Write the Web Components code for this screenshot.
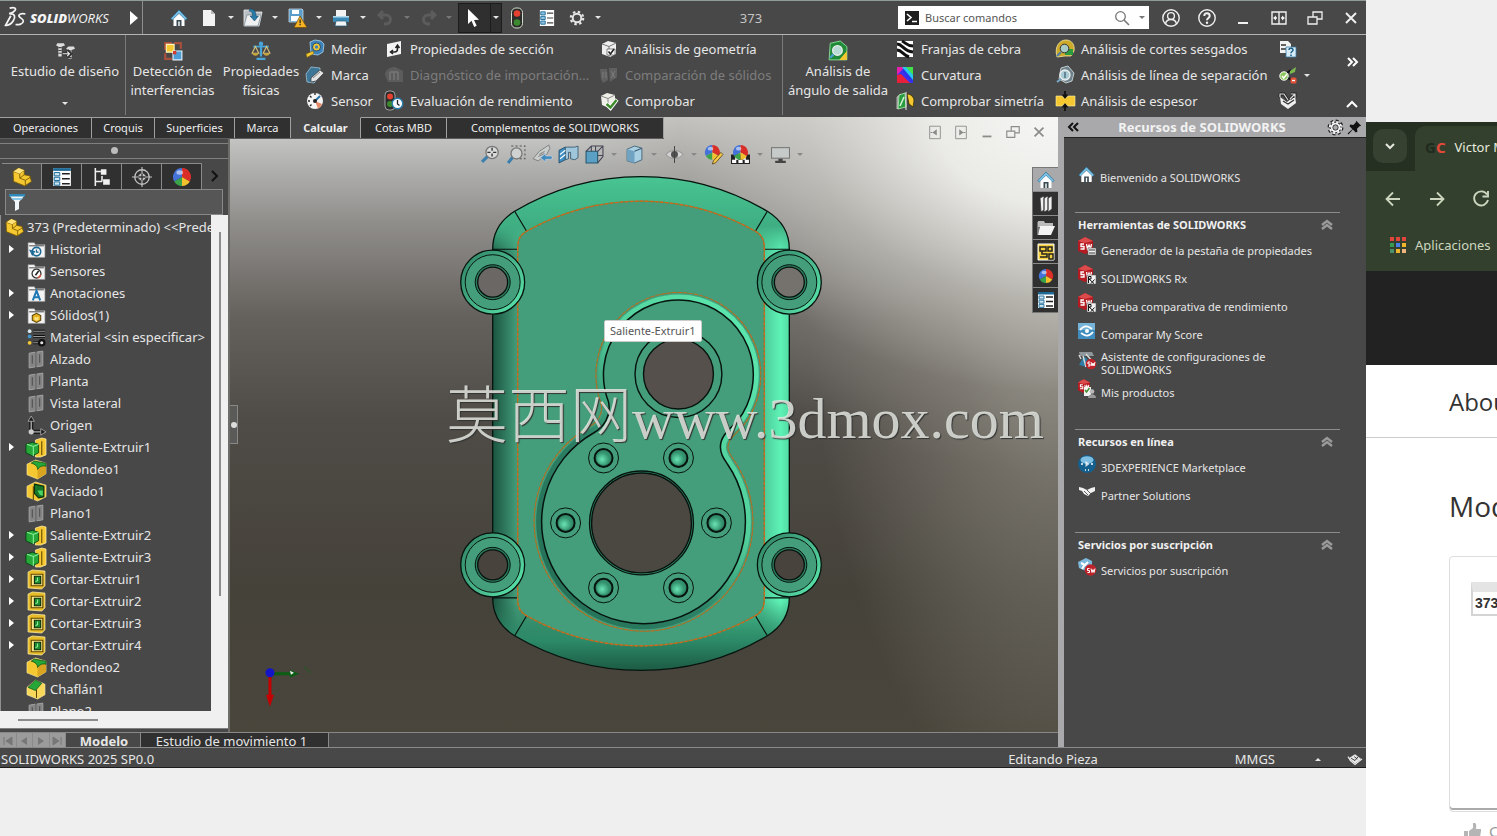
<!DOCTYPE html>
<html lang="es">
<head>
<meta charset="utf-8">
<title>373 - SOLIDWORKS</title>
<style>
html,body{margin:0;height:100%}
body{display:flex;overflow:hidden;background:#efefef;font:13px/18px "Noto Sans","Open Sans",sans-serif;color:#e6e6e6}
cad-desktop{flex:1;min-width:0}
web-browser{flex:0 0 131px}
</style>
</head>
<body>
<cad-desktop></cad-desktop>
<web-browser></web-browser>
<script>
const BASE = `<style>
*,:host{box-sizing:border-box}
button,input{font:inherit;color:inherit;background:none;border:0;padding:0;margin:0}
button{display:flex;align-items:center;justify-content:center}
a{color:inherit;text-decoration:none}
ul{list-style:none;margin:0;padding:0}
:host([hidden]){display:none}
</style>`;
function define(name, html, setup){
  const t = document.createElement('template');
  t.innerHTML = BASE + html;
  customElements.define(name, class extends HTMLElement{
    connectedCallback(){
      if(this.shadowRoot) return;
      this.attachShadow({mode:'open'}).append(t.content.cloneNode(true));
      if(setup) setup(this, this.shadowRoot);
    }
  });
}

/* ---------- icons, all on an 18 x 18 grid ---------- */
const ball = (x,y,r)=>`<g transform="translate(${x} ${y}) scale(${r/8})"><path fill="#4472d8" d="M0 0V-8A8 8 0 0 0-7 4Z"/><path fill="#d92f28" d="M0 0V-8A8 8 0 0 1 7 4Z"/><path fill="#3ba34a" d="M0 0-7 4A8 8 0 0 0 0 8Z"/><path fill="#f2c12d" d="M0 0 7 4A8 8 0 0 1 0 8Z"/><ellipse cx="-2" cy="-4" rx="3" ry="2" fill="#fff" opacity=".55"/></g>`;
const folder = `<path d="M1 2.500h6l1 2h9v12H1z" fill="#f4f4f4" stroke="#8d8d8d" stroke-width=".6"/><path d="M2 5h14v1H2z" fill="#555"/>`;
const swcube = `<path d="M0 3 7 -1l8 4v10l-8 3-7-3z" fill="#b51a21"/><path d="M0 3 7 -1l8 4-8 2z" fill="#dd4a4c"/><path d="M6 6H3v2.500H6V11H2.500M8.500 6l1 5 1.500-4 1.500 4 1-5" stroke="#fff" fill="none" stroke-width="1.300"/>`;
const yb = '#f5c832', gr='#25a838';
const ICONS = {
 home:`<path d="M9 1 .800 9.500 2.500 11 9 4.500l6.500 6.500 1.700-1.500z" fill="#79c4e8" stroke="#1d5f86" stroke-width=".6"/><path d="M3.500 10 9 4.800l5.500 5.200v7h-11z" fill="#fff"/><path d="M6.500 17v-6h5v6h-1.800v-4.500H8.300V17z" fill="#3a4a52"/>`,
 newdoc:`<path d="M3 1h8l4 4v12H3z" fill="#f2f2f2"/><path d="M11 1v4h4z" fill="#b8b8b8"/>`,
 open:`<path d="M0 1h6l1 2h11l-3 14H0z" fill="#b9c0c5" stroke="#eee" stroke-width=".8"/><path d="M3 6h14l-3 11H0z" fill="#eef0f2" stroke="#6a7780" stroke-width=".6"/><path d="M6 0c4 0 6 2 6 7h2.500L10.500 12 6 7h2.500C8.500 4 8 2.500 5 2z" fill="#2b7ba8" stroke="#12405c" stroke-width=".5"/>`,
 save:`<path d="M1 0h13l1 1v12H1z" fill="#5b9cc9" stroke="#d7e9f5" stroke-width=".7"/><path d="M4 1h7v4H4zM3 7h9v5H3z" fill="#fff"/><path d="M12 7 6 18.500h13z" fill="#f5b325" stroke="#6b4600" stroke-width=".7"/><path d="M11.500 10.500h1.200v3.700h-1.200zm0 4.500h1.200v1.200h-1.200z" fill="#222"/>`,
 print:`<path d="M4 1h10v6H4z" fill="#f4f4f4"/><path d="M1 7h16v6H1z" fill="#3b8ab5"/><path d="M1 7h16v1.500H1z" fill="#b6dcf0"/><path d="M4 12h10l1 5H3z" fill="#f4f4f4" stroke="#215a7a" stroke-width=".7"/>`,
 undo:`<path d="M3 6h7a4 4 0 0 1 0 9H8M7 2 3 6l4 4" fill="none" stroke="#5c5c5c" stroke-width="3"/>`,
 redo:`<path d="M15 6H8a4 4 0 0 0 0 9h2M11 2l4 4-4 4" fill="none" stroke="#5c5c5c" stroke-width="3"/>`,
 cursor:`<path d="M2 0v15l3.500-3.200 2.700 6.200 2.500-1.200-2.700-5.800 5-.3z" fill="#fff"/>`,
 traffic:`<rect x="3.500" y="-1" width="11" height="20" rx="4.500" fill="#2c2c2c" stroke="#d0dccb" stroke-width="1"/><circle cx="9" cy="4.500" r="3.300" fill="#e3402f"/><circle cx="9" cy="13.500" r="3.300" fill="#3c8a2f"/>`,
 list:`<path d="M1 1h16v16H1z" fill="#fff"/><path d="M1 1h16v2.500H1z" fill="#1d6a97"/><path d="M2 5h5v3H2zm0 4.200h5v3H2zm0 4.200h5v3H2z" fill="#cfe6f4" stroke="#1d6a97" stroke-width=".9"/><path d="M9 6h7M9 10.500h7M9 15h7" stroke="#222" stroke-width="1.300"/>`,
 proplist:`<path d="M1 0h16v18H1z" fill="#fff"/><path d="M2 2h5v3.500H2zm0 5.200h5v3.500H2zm0 5.200h5V16H2z" fill="#8cc4e4" stroke="#1d6a97" stroke-width="1"/><path d="M9 3.500h7M9 9h7M9 14.500h7" stroke="#444" stroke-width="1.300"/>`,
 gear:`<circle cx="9" cy="9" r="4.800" fill="none" stroke="currentColor" stroke-width="2.200"/><circle cx="9" cy="9" r="7" fill="none" stroke="currentColor" stroke-width="2.400" stroke-dasharray="2.750 2.748"/>`,
 cog:`<circle cx="9" cy="9" r="8" fill="none" stroke="#222" stroke-width="3" stroke-dasharray="3.400 2.883"/><circle cx="9" cy="9" r="7" fill="#222"/><circle cx="9" cy="9" r="6.800" fill="none" stroke="#f2f2f2" stroke-width="2.400" stroke-dasharray="2.800 2.541"/><circle cx="9" cy="9" r="5.800" fill="#f2f2f2"/><circle cx="9" cy="9" r="3.200" fill="#a9a9ab" stroke="#222"/>`,
 user:`<g fill="none" stroke="#f0f0f0" stroke-width="1.400"><circle cx="9" cy="9" r="8.200"/><circle cx="9" cy="7" r="3.400"/><path d="M3.500 15c1-6 10-6 11 0"/></g>`,
 help:`<circle cx="9" cy="9" r="8.200" fill="none" stroke="#f0f0f0" stroke-width="1.400"/><path d="M6.300 7C6.300 3 11.800 3.400 11.700 7c0 2-2.700 2.100-2.700 4.300" fill="none" stroke="#f0f0f0" stroke-width="2"/><circle cx="9" cy="13.700" r="1.200" fill="#f0f0f0"/>`,
 min:`<path d="M4 13h10v2H4z" fill="currentColor"/>`,
 split:`<path d="M2 3h14v12H2zM9 3v12M4 9h3M11 9h3" fill="none" stroke="#f0f0f0" stroke-width="1.400"/><path d="M3 9l3-2.500v5zM15 9l-3-2.500v5z" fill="#f0f0f0"/>`,
 restore:`<path d="M2 8h9v7H2zM7 8V3h9v7h-5" fill="none" stroke="currentColor" stroke-width="1.300"/>`,
 close:`<path d="M4 4l10 10M14 4 4 14" stroke="currentColor" stroke-width="1.900"/>`,
 search:`<circle cx="7.500" cy="7.500" r="4.800" fill="none" stroke="#777" stroke-width="1.300"/><path d="M11 11l5 5" stroke="#777" stroke-width="1.600"/>`,
 cmd:`<path d="M2 2h14v14H2z" fill="#1f1f1f"/><path d="M4 5l4 3.500L4 12M9 12.500h5" stroke="#fff" stroke-width="1.600" fill="none"/>`,
 paneL:`<path d="M3 2.500h12v14H3z" fill="none" stroke="#8b8b89"/><path d="M11 6v7L6 9.500zM4 9h2v1H4z" fill="#8b8b89"/>`,
 paneR:`<path d="M3 2.500h12v14H3z" fill="none" stroke="#8b8b89"/><path d="M7 6v7l5-3.500zM12 9h2v1h-2z" fill="#8b8b89"/>`,
 design:`<path d="M2 2h6l1 2-3 1v9H3V5L1 4z" fill="#ddd"/><path d="M3 6h3M3 8.500h3M3 11h3" stroke="#444"/><path d="M12 5h5l1 2-3 1v8h-3V8l-2-1z" fill="#ddd"/><path d="M12 9h3M12 15h3" stroke="#444"/><path d="M7 11.500h7M11 8.500l3 3-3 3" stroke="#333" stroke-width="3" fill="none"/><path d="M7 11.500h6M11 9.500l2 2-2 2" stroke="#eee" fill="none"/>`,
 interf:`<path d="M1 1h7v2H3v5H1zM17 1h-7v2h5v4h2zM1 17h7v-2H3v-4H1z" fill="#a8503c"/><path d="M3 3h7v7H3z" fill="${yb}" stroke="#fff6c0"/><path d="M9 9h8v8H9z" fill="#4d9ed6" stroke="#e4f3ff"/><path d="M9 9h3v3H9z" fill="#d93b2a"/>`,
 balance:`<path d="M8 2h2v12H8zM5 15h8v2H5z" fill="#49a4d8"/><circle cx="9" cy="2.500" r="2" fill="#49a4d8"/><path d="M2 5h14" stroke="#49a4d8" stroke-width="1.600"/><path d="M4 5 1 11h6zM14 5l-3 6h6z" fill="none" stroke="#d8c27a"/><path d="M1 11h6c-1 3-5 3-6 0zM11 11h6c-1 3-5 3-6 0z" fill="#c8a43c"/>`,
 measure:`<path d="M4 2 9 0l6 1 3 3-1 8-5 3-7-1z" fill="#3c82b8" stroke="#a9d4ef" stroke-width=".8"/><circle cx="10.500" cy="7" r="4" fill="#f5c832" stroke="#244d70"/><circle cx="10.500" cy="7" r="1.700" fill="#3c82b8"/><path d="M0 14 7 11l1 2.500-7 4z" fill="${yb}" stroke="#6b5a10" stroke-width=".6"/>`,
 markup:`<path d="M0 8 5 1l9 1v9l-6 6-7-1z" fill="#3d7596" stroke="#9ec3d6" stroke-width=".8"/><path d="M5 12 14 4l4 3-8 8-5 1z" fill="#e4e4e4" stroke="#333" stroke-width=".7"/><path d="M7 12l7-6" stroke="#888"/>`,
 sensor:`<circle cx="9" cy="9" r="8" fill="#f5f5f5"/><path d="M16 12a8 8 0 0 1-4 4.500L9 9z" fill="#e58a68"/><path d="M9 9 14 4" stroke="#2872a8" stroke-width="2"/><circle cx="9" cy="9" r="2" fill="#222"/><path d="M2 9h2M4 4l1.500 1.500M9 1v2M4 14l1.500-1.500" stroke="#222" stroke-width="1.300"/>`,
 secprop:`<path d="M2 4 16 1v13L2 17z" fill="#f3f3f3"/><path d="M6 12h3.500c2 0 3-1 3-3V6M10.500 8l2-3 2 3M8 10l-2.500 2L8 14" fill="none" stroke="#222" stroke-width="1.500"/>`,
 diag:`<path d="M0 9C0 3 6 1 10 1l8 4v11H3z" fill="#5c5c5c"/><path d="M5 6v8M9 6v8M13 6v8M5 6h8" stroke="#777" stroke-width="1.500"/>`,
 evalp:`<rect x="0" y="-1" width="10" height="19" rx="4" fill="#2c2c2c" stroke="#bbb" stroke-width=".8"/><circle cx="5" cy="4.500" r="3" fill="#e3402f"/><circle cx="5" cy="12" r="3" fill="#3c8a2f"/><circle cx="12.500" cy="11.500" r="5.300" fill="#f7fbff" stroke="#2b7ba8" stroke-width="1.400"/><path d="M12.500 8v4l2 1.500" stroke="#222" fill="none" stroke-width="1.300"/>`,
 geom:`<path d="M2 4 8 1l8 2v11l-6 3-8-3z" fill="#eee"/><path d="M2 4l7 2.500L16 3M9 6.500V17" stroke="#777" fill="none"/><path d="M7 9h8v6H7z" fill="#fff" stroke="#555" stroke-width=".7"/><path d="M8.500 11.500 10.500 14 14 9" stroke="#222" stroke-width="1.600" fill="none"/>`,
 comps:`<path d="M0 3h7l1 11-5 3-2-4zM9 2h8v9l-7 5z" fill="#606060"/><path d="M3 6v6M6 6v6M11 5l4 7M15 5l-4 7" stroke="#7c7c7c"/>`,
 check:`<path d="M1 4 7 1l8 2v10l-6 3-7-3z" fill="#f0f0ea"/><path d="M1 4l7 2.500L15 3M8 6.500V16" stroke="#888" fill="none"/><path d="M6 11.500 10.500 16 17 7.500" stroke="#fff" stroke-width="4" fill="none"/><path d="M6.500 12 10.500 15.500 16.500 8" stroke="#3f8c2c" stroke-width="2.500" fill="none"/>`,
 draft:`<path d="M2 2 11 0l6 5v12H1z" fill="#1f8b38" stroke="#8fe09a" stroke-width=".8"/><path d="M17 9v8h-7z" fill="${yb}"/><circle cx="8.500" cy="8.500" r="4.300" fill="#b9dbd6" stroke="#eee" stroke-width="1.200"/><path d="M5 12l-3 3" stroke="#4d9ed6" stroke-width="2"/>`,
 zebra:`<path d="M1 1h16v16H1z" fill="#fff"/><path d="M1 4c6 0 6 7 16 8M1 10c5 0 6 5 12 7M6 1c4 2 5 5 11 5" stroke="#111" stroke-width="3" fill="none"/>`,
 curv:`<path d="M1 1h16v16H1z" fill="#2a35e6"/><path d="M1 1h7L1 13z" fill="#e81fae"/><path d="M1 9 6 4l11 13H4z" fill="#3b2ff0"/><path d="M1 9l4-1 9 9H1z" fill="#e8203c"/><path d="M8 1h9v9z" fill="#3fe04a"/><path d="M6 1h4l7 8v5z" fill="#27c6f0"/>`,
 symm:`<path d="M1 5 5 2v12l-4 3z" fill="#8c8c8c" stroke="#ddd" stroke-width=".7"/><path d="M3 3 9 1l1 14-8 2z" fill="#2a9c40" stroke="#b6ecb9" stroke-width=".8"/><path d="M4 14 8 5" stroke="#d8f5da" stroke-width="1.500"/><path d="M11 2c4 0 7 3 7 7l-1 6-4-3z" fill="${yb}" stroke="#3b3100" stroke-width=".8"/><path d="M10 0v18" stroke="#eee"/>`,
 undercut:`<path d="M1 17C-2 6 4 0 10 0s9 5 8 11l-3 5H9z" fill="#cda92a" stroke="#f8e89a" stroke-width=".8"/><path d="M9 9h8v6H9z" fill="#2b9b3d"/><circle cx="8.500" cy="8.500" r="4.300" fill="#a9cbc6" stroke="#333" stroke-width="1"/><path d="M5 12l-4 4" stroke="#4d7ea6" stroke-width="2"/>`,
 parting:`<path d="M5 2 12 0l6 7-2 8-6 2-7-4z" fill="#6b8088" stroke="#dbe6ea" stroke-width=".8"/><circle cx="9" cy="9" r="5" fill="#a9cbd6" stroke="#eee" stroke-width="1.300"/><path d="M5 13l-4 3" stroke="#79a8c6" stroke-width="2"/><path d="M9 6v6" stroke="#23414f"/>`,
 thick:`<path d="M0 4h5c2 0 2 2 4 2s2-2 4-2h6v10h-6c-2 0-2-2-4-2s-2 2-4 2H0z" fill="${yb}" stroke="#fff0a8" stroke-width=".6"/><path d="M9-1v5M9 19v-5" stroke="#111" stroke-width="1.800"/><path d="M6 2.500h6L9 7zM6 15.500h6L9 11z" fill="#111"/>`,
 dochelp:`<path d="M1 1h8l3 3v9H1z" fill="#f2f2f2"/><path d="M2 9h8M2 5h5" stroke="#333" stroke-width="1.500"/><path d="M7 7h10v10H7z" fill="#d8ecf7" stroke="#3b7ca5" stroke-width=".8"/><path d="M10 10c0-2.500 4-2 4 0 0 1.500-2 1.500-2 3.200M12 14.500v1.500" stroke="#1d5f86" stroke-width="1.500" fill="none"/>`,
 tree:`<path d="M5 9 12 4M5 10l8 4" stroke="#111" stroke-width="2"/><circle cx="5" cy="10" r="4.200" fill="#8cc65a" stroke="#fff"/><path d="M3 10l1.700 2L8 8" stroke="#fff" fill="none" stroke-width="1.500"/><path d="M11 5l6-4-1 5-5 2z" fill="#7db84f"/><rect x="11.500" y="11.500" width="6" height="6" rx="1.500" fill="#e05338"/><path d="M13 14.500h3" stroke="#fff" stroke-width="1.300"/>`,
 swtri:`<path d="M1 5 8 10l8-6 1 7-8 6-7-5z" fill="#efefef"/><path d="M1 2h4l4 6M1 2v3M11 7l5-5M12 2h4v4" fill="none" stroke="#222" stroke-width="3"/><path d="M1 2h4l4 6M1 2v3M11 7l5-5M12 2h4v4" fill="none" stroke="#ddd" stroke-width="1.200"/><path d="M4 9l5 3 6-4" stroke="#333" fill="none" stroke-width="1.300"/>`,
 part:`<path d="M1 4 6 1l5 2v4l5 1 1.500 5-6 4-10-4z" fill="${yb}" stroke="#7a5b00" stroke-width=".7"/><path d="M1 4l6 2v4l5 2v5M7 6l4-3M7 10l4-3M12 12l5-3" fill="none" stroke="#7a5b00" stroke-width=".8"/><path d="M1.500 4l4.500-3 5 2-4 3z" fill="#ffe27a"/>`,
 config:`<path d="M3 1v16M3 4h5M3 13h6M9 8v5" stroke="#f0f0f0" stroke-width="1.400" fill="none"/><path d="M8 2h5v5H8zM10 11h6v5h-6z" fill="#f0f0f0"/>`,
 target:`<circle cx="9" cy="9" r="6.500" fill="none" stroke="#c4c4c4" stroke-width="1.200"/><path d="M9 0v18M0 9h18" stroke="#c4c4c4"/><path d="M7 6h4v6H7zM6 7h6v4H6z" fill="#c4c4c4"/><path d="M9 6v6M6 9h6" stroke="#333" stroke-width="1.200"/>`,
 ball:ball(9,9,8),
 funnel:`<path d="M1 2h16l-6 7v7l-4 2V9z" fill="#f0f6fa"/><path d="M1 1h16v2.500H1z" fill="#2e88b8"/><path d="M3 5h12l-2 2H5z" fill="#8cc9e8"/>`,
 fhist:folder+`<circle cx="9" cy="11" r="4" fill="none" stroke="#1d6a97" stroke-width="1.500"/><path d="M5 14l-2-4 4 1zM9 9v2.500h2" stroke="#1d6a97" fill="none" stroke-width="1.200"/>`,
 fsens:folder+`<circle cx="9" cy="11" r="4.200" fill="#fff" stroke="#333" stroke-width="1.200"/><path d="M8 12.500l3-4" stroke="#222" stroke-width="1.500"/><path d="M10 15a4 4 0 0 0 3-3" stroke="#e0583a" stroke-width="1.500" fill="none"/>`,
 fnote:folder+`<path d="M5.500 15.500 9 6.500l3.500 9M6.800 12.500h4.400" stroke="#1d78b4" stroke-width="1.900" fill="none"/>`,
 fsolid:folder+`<path d="M5 9l4-2 4 2v4.500l-4 2-4-2z" fill="#e8b21e" stroke="#5a4300"/><path d="M7 10l2 1 2-1v3l-2 1-2-1z" fill="#fbe27c"/>`,
 material:`<g><circle cx="2.500" cy="3" r="1.800" fill="#d9e6ee"/><circle cx="2.500" cy="8" r="1.800" fill="#3f95c8"/><circle cx="2.500" cy="14" r="1.800" fill="${yb}"/><path d="M6 3h11M6 8h11M6 14h5" stroke="#111" stroke-width="2.600"/><path d="M6 3h11M6 8h11M6 14h5" stroke="#999"/><circle cx="14" cy="14" r="3.600" fill="#111"/><circle cx="14" cy="14" r="1.500" fill="#ddd"/></g>`,
 plane:`<path d="M2 3l6-1v14l-6 1zM9 2l6-1v14l-6 1z" fill="#858585" stroke="#aaa" stroke-width=".8"/><path d="M8.500 0v18M5 5v8M12 4v8" stroke="#505050"/>`,
 origin:`<path d="M4 3v12h12" fill="none" stroke="#1c1c1c" stroke-width="4"/><path d="M4 2v13h13" fill="none" stroke="#aaa" stroke-width="1.300"/><path d="M1 5l3-5 3 5zM13 12l5 3-5 3z" fill="#1c1c1c" stroke="#aaa" stroke-width=".8"/><circle cx="4" cy="15" r="2.500" fill="#ccc"/>`,
 extrude:`<path d="M8 2l6-2 4 1v15l-5 2H8z" fill="${yb}" stroke="#fff0a8" stroke-width=".7"/><path d="M14 3v13" stroke="#5a4300"/><path d="M-1 6l6-2 6 2v8l-6 3-6-3z" fill="${gr}" stroke="#063f10" stroke-width=".8"/><path d="M0 6l6 2 5-2M6 8v9" stroke="#8df09a" fill="none"/>`,
 fillet:`<path d="M0 4 8 0l10 3v10l-8 5-10-4z" fill="${yb}" stroke="#fff0a8" stroke-width=".6"/><path d="M10 8l8-4v9l-8 5z" fill="#d9a520"/><path d="M7 1l11 2v3c-3-1-6 0-8 3 0-3-2-5-6-6z" fill="${gr}" stroke="#063f10" stroke-width=".6"/>`,
 shell:`<path d="M0 4 8 0l10 3v11l-8 4-10-4z" fill="${yb}" stroke="#fff0a8" stroke-width=".6"/><path d="M7 2l9 2v10l-5 1-4-4z" fill="#17752a" stroke="#042b0a"/><path d="M10 8h5v5l-3-1z" fill="#4cd561"/><path d="M6 4v13" stroke="#5a4300"/>`,
 cut:`<path d="M1 2 5 0l12 1v14l-3 3-13-1z" fill="#e8bc26" stroke="#fff0a8" stroke-width=".7"/><path d="M4 4h11v11H4z" fill="#ffe88c" stroke="#5a4300"/><path d="M7 6h6v7H7z" fill="#1d8b31" stroke="#042b0a"/><path d="M8 11l2-1V7" stroke="#8df09a" fill="none"/>`,
 chamfer:`<path d="M0 7 8 0l9 4v10l-7 4-10-4z" fill="#f8d85a" stroke="#fff0a8" stroke-width=".6"/><path d="M1 7 8 0l6 3-6 7z" fill="${gr}" stroke="#063f10" stroke-width=".6"/><path d="M9 9v8" stroke="#5a4300"/>`,
 zoomfit:`<path d="M7 10 1 16" stroke="#3d7fae" stroke-width="3"/><circle cx="10.500" cy="7" r="5.800" fill="#d8dbd9" stroke="#777" stroke-width="1.200"/><path d="M10.500 2.500v9M6 7h9" stroke="#333" stroke-width="1.300" stroke-dasharray="3 2.500"/>`,
 zoomarea:`<path d="M4 1h13v12H9" fill="none" stroke="#555" stroke-dasharray="2 2"/><path d="M6 11 1 17" stroke="#3d7fae" stroke-width="3"/><circle cx="9" cy="8" r="5.200" fill="#cfd2d0" stroke="#777" stroke-width="1.200"/>`,
 prev:`<path d="M0 13 6 6l9-6 1 3-3 6-8 6z" fill="#c9cecd" stroke="#777" stroke-width=".8"/><path d="M6 9l5-3M5 11l6-3" stroke="#888"/><path d="M7 12l5-4v2.500h6v3h-6V16z" fill="#3d8abc" stroke="#dde" stroke-width=".5"/>`,
 section:`<path d="M0 5 6 2v12l-6 3z" fill="#3f8fc4" stroke="#234a66" stroke-width=".8"/><path d="M6 2h9l3-1v11l-3 2-4-1V7H9v6l-3 1z" fill="#9fc6db" stroke="#34576c" stroke-width=".8"/><path d="M1 9l5-4M1 13l5-4" stroke="#fff"/>`,
 orient:`<path d="M1 6h11v11H1z" fill="#5a9fc4" stroke="#24566f"/><path d="M1 6l5-5h11v10l-5 6M12 6l5-5M6 1v5M10 1v5M12 10h5" fill="none" stroke="#445"/>`,
 cube:`<path d="M2 4 9 1l7 2v11l-7 3-7-2z" fill="#a9cfe3" stroke="#3b5b6e" stroke-width=".8"/><path d="M2 4l7 2v11l-7-2z" fill="#6fa3c1"/><path d="M9 6l7-3" stroke="#3b5b6e"/>`,
 eye:`<path d="M1 9c4-5 12-5 16 0-4 5-12 5-16 0z" fill="#d2d2d2" stroke="#999"/><circle cx="9" cy="9" r="3.300" fill="#505050"/><path d="M9 1v16" stroke="#444"/>`,
 appear:ball(7,7,7)+`<path d="M8 15 15 7l2 2-7 8-3 1z" fill="#f3c64a" stroke="#4c3a10" stroke-width=".7"/>`,
 scene:`<path d="M0 9h18v9H0z" fill="#222"/><path d="M1 14h4v3H1zM7 14h4v3H7zM13 14h4v3h-4zM4 11h3v3H4zM11 11h3v3h-3z" fill="#fff"/>`+ball(9,7,7),
 monitor:`<path d="M0 2h18v11H0z" fill="#777"/><path d="M1 3h16v9H1z" fill="#c6cac8"/><path d="M7 13h4v2h3v2H4v-2h3z" fill="#444"/>`,
 books:`<g fill="#efefef" stroke="#333" stroke-width=".8"><path d="M3 3l4-2v14l-3 2zM7 3l4-2v14l-4 2zM11 3l4-2v13l-4 3z"/></g>`,
 folderopen:`<path d="M1 2h6l1 2h8v4H1z" fill="#bbb"/><path d="M3 7h15l-4 9H1z" fill="#f3f3f3"/><path d="M1 3v13" stroke="#bbb"/>`,
 palette:`<path d="M1 1h16v16H1z" fill="#f4d13c" stroke="#fff"/><path d="M3 4h6v4H3zM11 4h4v4h-4zM5 8v3h5v3H3M12 11h4v5h-4z" fill="none" stroke="#222" stroke-width="1.500"/>`,
 sw:swcube+`<path d="M10 10h8v7h-8z" fill="#f2f2f2" stroke="#555" stroke-width=".6"/><path d="M11 12h6M11 15h6" stroke="#333"/>`,
 swrx:swcube+`<path d="M9 9h9v9H9z" fill="#f2f2f2" stroke="#555" stroke-width=".6"/><path d="M10.500 17v-6.500h2.500v2.500h-2l5 4.500M13 17.500l3.500-4" stroke="#111" fill="none"/>`,
 score:`<path d="M0 1h17v16H0z" fill="#3f8ebf"/><path d="M0 1h17v7H0z" fill="#75b4d8"/><path d="M2 8c5-6 9-3 12-1M15 10c-5 6-9 3-12 1" stroke="#fff" stroke-width="1.800" fill="none"/><circle cx="9" cy="9" r="2" fill="#fff"/>`,
 wizard:`<path d="M1 1h13l2 4H2z" fill="#8f979a"/><path d="M1 14 6 5l6 6-3 5z" fill="#2e7ca8"/><path d="M1 4l2 4M5 5l3 11M8 3l8 9" stroke="#ddd" stroke-width="1.400"/><circle cx="13" cy="13" r="5.300" fill="#c0222a"/><path d="M12 11h-2v2h2v2h-2M13 11l1 4 1-3 1 3 1-4" stroke="#fff" fill="none"/>`,
 prod:`<g transform="scale(.8)">${swcube}</g><path d="M6 7h7v9H6z" fill="#f2f2f2"/><path d="M7 10l1.500 2 3-4" stroke="#3f8c2c" fill="none" stroke-width="1.400"/><path d="M10 18c0-5 8-5 8 0z" fill="#9a9a9a"/><circle cx="14" cy="11.500" r="2.300" fill="#bbb"/>`,
 dx:`<circle cx="9" cy="9" r="9" fill="#14608f"/><ellipse cx="9" cy="5" rx="6.500" ry="3.800" fill="#7fbfe2"/><path d="M7.500 6v6l4-3z" fill="#fff" opacity=".8"/><path d="M3 9h2M13 9h2M7 15h1M10 15h1" stroke="#fff" stroke-width="1.400"/>`,
 hands:`<path d="M1 4l4 1 4 2 4-2 4-1v4l-4 2-3 3-4-2-2-3-3-1z" fill="#f1f1f1"/><path d="M6 8l4 4M9 7l4 4" stroke="#555" stroke-width=".9"/>`,
 subs:`<path d="M0 4 8 0l6 3v8l-6 2-7-3z" fill="#7cb9dc"/><path d="M3 5l4 2 3-3M4 11l3-5" stroke="#fff" stroke-width="2" fill="none"/><circle cx="12.500" cy="12" r="5.800" fill="#c0222a"/><path d="M11.500 10.500h-2v2h2v2h-2M13 10.500l1 4 1-3 1 3 1-4" stroke="#fff" fill="none"/>`,
 pin:`<path d="M11 1l6 6-2 .5-3 3 .5 3.500-2 1-3.500-3.500L2 17l-1 0 0-1 5.500-5L3 7.500l1-2 3.500.5 3-3z" fill="#111"/>`,
 tagsw:`<path d="M1 8l8-5 8 6-8 6z" fill="#e8e8e8"/><path d="M0 9l9 7 9-6M4 8l5 3 4-5M8 6l4 3" fill="none" stroke="#333" stroke-width="1.200"/><path d="M0 6l3 5 6 5 9-7" fill="none" stroke="#e8e8e8" stroke-width="1.500"/>`,
 logo:`<g fill="none" stroke="#f4f4f4" stroke-width="1.500"><path d="M4 1C8 0 10 1 8.500 3 7.500 4.500 5 5.500 3.500 5.700M4 6c5-.5 5 3 3 6-1.500 2.500-4.500 4-6.500 3.700L5 7.500M17.500 6C14 5 11.500 6.500 12 8c.5 1.500 4 2 3.700 4.200-.2 2.300-3.700 3.300-6.700 2.800"/></g>`,
 down:`<path d="M5 7l4 4 4-4" fill="none" stroke="#e4e8dc" stroke-width="2"/>`,
 back:`<path d="M16 9H3M9 2.500 2.500 9 9 15.500" fill="none" stroke="#cdd6bf" stroke-width="1.800"/>`,
 fwd:`<path d="M2 9h13M9 2.500 15.500 9 9 15.500" fill="none" stroke="#cdd6bf" stroke-width="1.800"/>`,
 reload:`<path d="M15 4.500A7 7 0 1 0 16 10M16 1v5.500h-5.500" fill="none" stroke="#cdd6bf" stroke-width="1.900"/>`,
 apps:['#e2453c','#e2453c','#e2453c','#3a9b50','#4a80e8','#f0b52c','#4b8f6b','#f0b52c','#f0b57c'].map((c,i)=>`<rect x="${1+i%3*6}" y="${1+Math.floor(i/3)*6}" width="4" height="4" fill="${c}"/>`).join(''),
 thumb:`<path d="M0 9h4v9H0zM5 9l4-3V1h2c2 1 1 4 1 6h5v2l-1.500 9H5z" fill="#b5b5b5"/>`
};
customElements.define('cad-icon', class extends HTMLElement{
  static observedAttributes = ['name'];
  connectedCallback(){ this.draw(); }
  attributeChangedCallback(){ this.draw(); }
  draw(){
    const root = this.shadowRoot || this.attachShadow({mode:'open'});
    root.innerHTML =
     `<style>:host{display:block;flex:none;width:var(--size,18px);height:var(--size,18px)}svg{display:block;width:100%;height:100%;overflow:visible}</style><svg viewBox="0 0 18 18" aria-hidden="true">${ICONS[this.getAttribute('name')]||''}</svg>`;
  }
});
define('drop-caret', `<style>:host{display:flex;flex:none;width:var(--cell,22px);align-items:center;justify-content:center}
i{border:3px solid transparent;border-top:3px solid currentColor;border-bottom:0}
:host([up]) i{transform:scaleY(-1)}</style><i></i>`);

/* ---------- title bar ---------- */
define('title-bar', `<style>
:host{display:flex;height:35px;border-top:1px solid #8f9b96;border-bottom:1px solid #b4b4b4;background:#484848;align-items:center;flex:none}
.brand{display:flex;align-items:center;width:143px;height:33px;padding-left:5px;gap:4px;border-right:1px solid #8e8e8e;font-family:"Open Sans",sans-serif;font-style:italic;color:#f4f4f4}
.brand cad-icon{--size:21px}.brand b{font-weight:800}
.brand button{margin-left:auto;margin-right:4px;border:7px solid transparent;border-left:8px solid #fff;border-right:0}
.c{width:22px;height:32px}.home{margin-left:25px;margin-right:8px}
.w{width:30px;height:32px}.sel{display:flex;height:30px;background:#2f2f2f;border:1px solid #1c1c1c}
.sel button{width:32px;border-right:1px solid #1c1c1c}.sel drop-caret{--cell:10px}
.dim{color:#777}h1{flex:1;margin:0;text-align:center;font-size:13px;font-weight:400;color:#c4c4c4}
.search{display:flex;align-items:center;width:251px;height:23px;background:#fff;color:#555;padding-left:5px;gap:4px}
.search input{flex:1;min-width:0;font-size:11px;color:#555}.search input::placeholder{color:#555;opacity:1}
.search drop-caret{--cell:14px;color:#777}
.win{display:flex;gap:16px;padding:0 5px 0 12px;color:#f0f0f0}.win button{width:20px;height:24px}
</style>
<div class="brand"><cad-icon name="logo"></cad-icon><span><b>SOLID</b>WORKS</span><button aria-label="Menú"></button></div>
<button class="c home"><cad-icon name="home"></cad-icon></button>
<button class="c"><cad-icon name="newdoc"></cad-icon></button><drop-caret></drop-caret>
<button class="c"><cad-icon name="open"></cad-icon></button><drop-caret></drop-caret>
<button class="c"><cad-icon name="save"></cad-icon></button><drop-caret></drop-caret>
<button class="c"><cad-icon name="print"></cad-icon></button><drop-caret></drop-caret>
<button class="c"><cad-icon name="undo"></cad-icon></button><drop-caret class="dim"></drop-caret>
<button class="c"><cad-icon name="redo"></cad-icon></button><drop-caret class="dim" style="--cell:18px"></drop-caret>
<div class="sel"><button><cad-icon name="cursor"></cad-icon></button><drop-caret></drop-caret></div>
<button class="w"><cad-icon name="traffic"></cad-icon></button><button class="w"><cad-icon name="proplist" style="--size:16px"></cad-icon></button><button class="w"><cad-icon name="gear" style="--size:16px"></cad-icon></button><drop-caret style="--cell:12px"></drop-caret>
<h1>373</h1>
<div class="search"><cad-icon name="cmd"></cad-icon><input type="text" placeholder="Buscar comandos" aria-label="Buscar comandos"><cad-icon name="search"></cad-icon><drop-caret></drop-caret></div>
<div class="win"><button><cad-icon name="user"></cad-icon></button><button><cad-icon name="help"></cad-icon></button><button><cad-icon name="min"></cad-icon></button><button><cad-icon name="split"></cad-icon></button><button><cad-icon name="restore"></cad-icon></button><button><cad-icon name="close"></cad-icon></button></div>`);

/* ---------- ribbon ---------- */
define('ribbon-command', `<style>
:host{display:block;flex:none}
button{height:26px;gap:7px;white-space:nowrap}
:host([large]) button{flex-direction:column;justify-content:flex-start;width:100%;height:82px;gap:1px;padding-top:6px;line-height:19px;white-space:normal}
:host([disabled]) button{color:#7d7d7d}
:host([large]) cad-icon{--size:20px}
</style><button><cad-icon></cad-icon><span><slot></slot></span></button>`,
 (h,r)=>r.querySelector('cad-icon').setAttribute('name',h.getAttribute('icon')));
define('ribbon-bar', `<style>
:host{display:flex;height:82px;background:#484848;flex:none;overflow:hidden}
.l{border-right:1px solid #7a7a7a;margin-bottom:2px}
.col{padding:1px 0 0 3px;flex:none}
.study{position:relative;width:126px;padding-left:5px;flex:none}.study drop-caret{position:absolute;left:0;right:0;bottom:10px;width:100%;padding-left:5px}
.row{display:flex}.more{margin-left:auto;display:flex;flex-direction:column;justify-content:space-between;padding:14px 4px 4px 0}
svg{display:block}
</style>
<div class="study l"><ribbon-command large icon="design">Estudio de diseño</ribbon-command><drop-caret></drop-caret></div>
<ribbon-command large icon="interf" style="width:93px">Detección de interferencias</ribbon-command>
<ribbon-command large icon="balance" style="width:84px">Propiedades físicas</ribbon-command>
<div class="col" style="width:79px"><ribbon-command icon="measure">Medir</ribbon-command><ribbon-command icon="markup">Marca</ribbon-command><ribbon-command icon="sensor">Sensor</ribbon-command></div>
<div class="col" style="width:215px"><ribbon-command icon="secprop">Propiedades de sección</ribbon-command><ribbon-command disabled icon="diag">Diagnóstico de importación...</ribbon-command><ribbon-command icon="evalp">Evaluación de rendimiento</ribbon-command></div>
<div class="col l" style="width:186px"><ribbon-command icon="geom">Análisis de geometría</ribbon-command><ribbon-command disabled icon="comps">Comparación de sólidos</ribbon-command><ribbon-command icon="check">Comprobar</ribbon-command></div>
<ribbon-command large icon="draft" style="width:110px">Análisis de ángulo de salida</ribbon-command>
<div class="col" style="width:160px"><ribbon-command icon="zebra">Franjas de cebra</ribbon-command><ribbon-command icon="curv">Curvatura</ribbon-command><ribbon-command icon="symm">Comprobar simetría</ribbon-command></div>
<div class="col" style="width:223px"><ribbon-command icon="undercut">Análisis de cortes sesgados</ribbon-command><ribbon-command icon="parting">Análisis de línea de separación</ribbon-command><ribbon-command icon="thick">Análisis de espesor</ribbon-command></div>
<div class="col"><ribbon-command icon="dochelp"></ribbon-command><div class="row"><ribbon-command icon="tree"></ribbon-command><drop-caret style="--cell:6px"></drop-caret></div><ribbon-command icon="swtri"></ribbon-command></div>
<div class="more"><button aria-label="Más"><svg width="20" height="24"><path d="M6 9l4 4-4 4M11 9l4 4-4 4" fill="none" stroke="#fff" stroke-width="2"/></svg></button><button aria-label="Contraer"><svg width="20" height="18"><path d="M5 12l5-5 5 5" fill="none" stroke="#fff" stroke-width="2"/></svg></button></div>`);

/* ---------- command tabs ---------- */
define('command-tabs', `<style>
:host{display:flex;height:22px;flex:none;border-bottom:1px solid #5c5c5c;background:#303030}
button{font-size:11px;border:solid #a0a0a0;border-width:1px 1px 0 0;color:#efefef;white-space:nowrap;height:21px;background:#303030}
.on{font-weight:700;background:#484848;border-top-color:#484848}
</style>
<button style="width:92px">Operaciones</button><button style="width:63px">Croquis</button><button style="width:80px">Superficies</button><button style="width:56px">Marca</button><button class="on" style="width:70px">Calcular</button><button style="width:86px">Cotas MBD</button><button style="width:217px">Complementos de SOLIDWORKS</button>`);

/* ---------- feature manager ---------- */
define('tree-item', `<style>
:host{display:flex;height:22px;align-items:center;white-space:nowrap;padding-left:8px}
.t{width:18px;flex:none;height:16px;justify-content:flex-start}
.t i{border:4px solid transparent;border-left:5px solid #fff;border-right:0}
:host(:not([open-arrow])) i{visibility:hidden}
cad-icon{--size:19px}
span{padding-left:4px}
:host([root]){padding-left:4px}:host([root]) .t{display:none}:host([root]) span{padding-left:3px}
</style><button class="t" tabindex="-1"><i></i></button><cad-icon></cad-icon><span><slot></slot></span>`,
 (h,r)=>r.querySelector('cad-icon').setAttribute('name',h.getAttribute('icon')));
const items = [['fhist','Historial',1],['fsens','Sensores'],['fnote','Anotaciones',1],['fsolid','Sólidos(1)',1],['material','Material &lt;sin especificar&gt;'],['plane','Alzado'],['plane','Planta'],['plane','Vista lateral'],['origin','Origen'],['extrude','Saliente-Extruir1',1],['fillet','Redondeo1'],['shell','Vaciado1'],['plane','Plano1'],['extrude','Saliente-Extruir2',1],['extrude','Saliente-Extruir3',1],['cut','Cortar-Extruir1',1],['cut','Cortar-Extruir2',1],['cut','Cortar-Extruir3',1],['cut','Cortar-Extruir4',1],['fillet','Redondeo2'],['chamfer','Chaflán1'],['plane','Plano2']];
define('feature-manager', `<style>
:host{display:flex;flex-direction:column;width:230px;flex:none;background:#484848;border-right:2px solid #6d6d6a;min-height:0}
.grip{height:20px;flex:none;border-bottom:1px solid #808080;display:flex;align-items:center;justify-content:center;border-top:4px solid #484848;box-shadow:inset 0 1px #808080}
.grip i{width:7px;height:7px;border-radius:4px;background:#bdbdbd}
.tabs{display:flex;height:26px;margin:4px 0 0 2px;flex:none}
.tabs button{width:40px;flex:none;background:#303030;border:solid #8a8a8a;border-width:1px 1px 0 0}
.tabs .on{background:#484848}.tabs .next{background:none;border:0;width:26px}
.tabs cad-icon{--size:20px}
.filter{display:flex;align-items:center;height:26px;margin:0 5px 0 5px;border:1px solid #888;background:#565656;padding-left:2px;flex:none}
.filter input{flex:1;min-width:0}
.view{flex:1;display:flex;min-height:0;border-left:1px solid #909090}
.tree{flex:1;overflow:hidden;min-width:0;padding-top:1px}
.vs{width:17px;background:#f0f0f0;display:flex;justify-content:center;padding-top:17px}
.vs i{width:2px;height:76%;background:#8c8c8c}
.hs{height:17px;background:#f0f0f0;flex:none;display:flex;align-items:center;padding-left:18px}
.hs i{width:80px;height:2px;background:#8c8c8c}
.foot{height:4px;flex:none;border-top:1px solid #808080}
</style>
<div class="grip"><i></i></div>
<div class="tabs"><button class="on"><cad-icon name="part"></cad-icon></button><button><cad-icon name="list"></cad-icon></button><button><cad-icon name="config"></cad-icon></button><button><cad-icon name="target"></cad-icon></button><button><cad-icon name="ball"></cad-icon></button><button class="next"><svg width="12" height="14"><path d="M3 2l5 5-5 5" fill="none" stroke="#111" stroke-width="2"/></svg></button></div>
<div class="filter"><cad-icon name="funnel"></cad-icon><input type="text" aria-label="Filtro"></div>
<div class="view"><div class="tree"><tree-item root icon="part">373 (Predeterminado) &lt;&lt;Predeterminado&gt;</tree-item>${items.map(i=>`<tree-item icon="${i[0]}"${i[2]?' open-arrow':''}>${i[1]}</tree-item>`).join('')}</div><div class="vs"><i></i></div></div>
<div class="hs"><i></i></div><div class="foot"></div>`);

/* ---------- 3D model ---------- */
const neck = 'M609 402A75 75 0 1 1 738 421C728 431 721 437 721 447C721 454 724 458 728 464A102 102 0 1 1 594 433C604 427 612 416 609 402Z';
const outer = 'M493 249C493 232 502 219 515 211A248 248 0 0 1 768 211C781 219 790 232 790 249V598C790 615 781 628 768 636A248 248 0 0 1 515 636C502 628 493 615 493 598Z';
const inner = 'M518 249C518 240 520 235 527 231A233 233 0 0 1 756 231C763 235 765 240 765 249V598C765 607 763 612 756 616A233 233 0 0 1 527 616C520 612 518 607 518 598Z';
const boss = (x,y,h)=>`<g transform="translate(${x} ${y})"><circle r="32" fill="url(#rim)" stroke="#06130e" stroke-width="1.300"/><circle r="27.500" fill="#449e7b" stroke="#06130e"/><circle r="17.500" fill="#2b7a5c" stroke="#06130e"/><circle r="15" fill="${h}" stroke="#06130e" stroke-width="1.300"/></g>`;
const screw = (x,y)=>`<g transform="translate(${x} ${y})" stroke="#06130e"><circle r="15" fill="#449e7b"/><circle r="9" fill="#328363" stroke-width="2"/><circle r="7" fill="url(#dim)" stroke="none"/></g>`;
define('part-view', `<style>:host{display:block}svg{display:block;width:100%;height:100%}</style>
<svg viewBox="230 139 829 593" role="img" aria-label="Pieza 373">
<defs>
<linearGradient id="side"><stop offset="0" stop-color="#1a5440"/><stop offset=".085" stop-color="#449e7b"/><stop offset=".91" stop-color="#4cc896"/><stop offset=".97" stop-color="#5ef2b6"/><stop offset="1" stop-color="#52dca4"/></linearGradient>
<linearGradient id="top" x2="0" y2="1"><stop offset="0" stop-color="#48c492"/><stop offset=".1" stop-color="#3fae82"/><stop offset=".16" stop-color="#48c492" stop-opacity="0"/><stop offset=".86" stop-color="#237052" stop-opacity="0"/><stop offset=".94" stop-color="#2c8a68"/><stop offset="1" stop-color="#1c5a44"/></linearGradient>
<linearGradient id="fil" x1="0" y1="1" x2="1" y2="0"><stop offset="0" stop-color="#236e54"/><stop offset=".4" stop-color="#2d8165"/><stop offset=".62" stop-color="#52d09c"/><stop offset="1" stop-color="#5ceab0"/></linearGradient>
<linearGradient id="rim" y2=".8"><stop offset="0" stop-color="#2d7f61"/><stop offset=".6" stop-color="#49b78b"/><stop offset="1" stop-color="#58e4aa"/></linearGradient>
<radialGradient id="dim" cx=".4" cy=".6"><stop offset="0" stop-color="#6be3b4"/><stop offset="1" stop-color="#32936e"/></radialGradient>
</defs>
<path d="${outer}" fill="url(#side)"/><path d="${outer}" fill="url(#top)" stroke="#06130e" stroke-width="1.300"/>
<path d="M515 211l12 20M768 211l-12 20M515 636l12-20M768 636l-12-20M493 249h25M790 249h-25M493 598h25M790 598h-25" stroke="#06130e" stroke-width="1.200"/>
<path d="${inner}" fill="#449e7b" stroke="#8c7a30" stroke-width="1.300"/><path d="${inner}" fill="none" stroke="#d2691e" stroke-width="1.300" stroke-dasharray="3 2"/>
${boss(493,282,'#6b6764')}${boss(790,282,'#75716d')}${boss(493,565,'#48433c')}${boss(790,565,'#48433c')}
<path d="${neck}" fill="none" stroke="#8c7a30" stroke-width="16"/><path d="${neck}" fill="none" stroke="#c06c22" stroke-width="16" stroke-dasharray="3 2"/>
<path d="${neck}" fill="none" stroke="#449e7b" stroke-width="14"/>
<path d="${neck}" fill="none" stroke="url(#fil)" stroke-width="11"/>
<path d="${neck}" fill="#449e7b" stroke="#06130e" stroke-width="1.500"/>
<g stroke="#06130e" stroke-width="1.400"><circle cx="679" cy="374" r="43.500" fill="#449e7b"/><circle cx="679" cy="374" r="35" fill="#55504b"/><circle cx="642" cy="523" r="52" fill="#359271"/><circle cx="642" cy="523" r="50" fill="#4b4741"/></g>
${screw(604,458)}${screw(679,458)}${screw(566,523)}${screw(717,523)}${screw(604,588)}${screw(679,588)}
<path d="M270 674h22" stroke="#0a5d12" stroke-width="3"/><path d="M290 670l9 4-9 4z" fill="#0a5d12"/><path d="M290 671l4 2-3 2z" fill="#eee"/><path d="M270 674v24" stroke="#c40000" stroke-width="3"/><path d="M266 695h8l-4 12z" fill="#c40000"/><circle cx="270" cy="673" r="4.500" fill="#1515c8"/><path d="M304 667l7 6" stroke="#245a24" stroke-width="2" opacity=".5"/>
</svg>`);

define('view-toolbar', `<style>:host{display:flex;align-items:center;color:#888}button{width:26px;height:22px}cad-icon{--size:19px}drop-caret{--cell:14px}</style>
<button><cad-icon name="zoomfit"></cad-icon></button><button><cad-icon name="zoomarea"></cad-icon></button><button><cad-icon name="prev"></cad-icon></button><button><cad-icon name="section"></cad-icon></button><button><cad-icon name="orient"></cad-icon></button><drop-caret></drop-caret><button><cad-icon name="cube"></cad-icon></button><drop-caret></drop-caret><button><cad-icon name="eye"></cad-icon></button><drop-caret></drop-caret><button><cad-icon name="appear"></cad-icon></button><button><cad-icon name="scene"></cad-icon></button><drop-caret></drop-caret><button><cad-icon name="monitor"></cad-icon></button><drop-caret></drop-caret>`);

define('side-tabs', `<style>:host{display:block;width:26px;background:#303030;border:1px solid #777;border-right:0}button{width:25px;height:24px;border-bottom:1px solid #8a8a8a}button:last-child{border:0}.on{background:#a9a9ab}</style>
<button class="on"><cad-icon name="home"></cad-icon></button><button><cad-icon name="books"></cad-icon></button><button><cad-icon name="folderopen"></cad-icon></button><button><cad-icon name="palette"></cad-icon></button><button><cad-icon name="ball" style="--size:16px"></cad-icon></button><button><cad-icon name="list"></cad-icon></button>`);

/* ---------- graphics workspace ---------- */
define('work-space', `<style>
:host{display:flex;flex-direction:column;flex:1;min-width:0;min-height:0;
background:
radial-gradient(ellipse 46% 56% at 100% 0,#f6f6f4 0,rgba(240,240,237,.92) 25%,rgba(200,199,193,.62) 52%,rgba(150,147,140,.25) 78%,rgba(110,106,96,0) 100%),
radial-gradient(ellipse 24% 95% at 100% 18%,rgba(176,174,164,.85) 0,rgba(150,147,136,.5) 45%,rgba(110,106,96,0) 100%),
linear-gradient(#d2d2d0 0,#b0b0ae 8%,#8f8d8a 17%,#64605c 32%,#4f4b46 48%,#45423a 75%,#4a463c 100%)}
.top{display:flex;align-items:flex-start;flex:none;height:22px}
.doc{display:flex;gap:8px;margin-left:auto;padding:7px 10px 0 0;color:#8b8b89}
.doc button{width:18px}.doc cad-icon{--size:16px}
.mid{flex:1;display:flex;min-height:0}
.stage{flex:1;position:relative;min-width:0}
part-view{position:absolute;inset:0}
view-toolbar{position:absolute;top:4px;left:247px}
side-tabs{position:absolute;right:0;top:28px}
.tip{position:absolute;left:374px;top:181px;height:22px;padding:0 5px;background:#fff;border:1px solid #ccc;border-radius:2px;color:#555;font-size:11px;line-height:20px}
.mark{position:absolute;left:216px;top:238px;margin:0;white-space:nowrap;font:300 58px/80px "Liberation Serif","Noto Sans CJK SC",serif;color:rgba(236,238,232,.82);text-shadow:1px 1px 1px #333}
.mark span{font-size:62px}
.handle{position:absolute;left:0;top:266px;width:8px;height:39px;background:#5a5a58;border:1px solid #888;border-left:0}
.handle i{width:6px;height:6px;border-radius:3px;background:#ddd}
.bottom{display:flex;height:15px;flex:none;background:#484848;border-top:1px solid #888}
.bottom button{line-height:16px;height:16px;white-space:nowrap;border-right:1px solid #8a8a8a}
.nav{display:flex;width:66px;background:#9b9b9b;color:#777}.nav button{flex:1}
.m{width:75px;font-weight:700;padding-left:2px}.s{width:188px;background:#303030;padding-right:6px}
</style>
<div class="top"><command-tabs></command-tabs><div class="doc"><button><cad-icon name="paneL"></cad-icon></button><button><cad-icon name="paneR"></cad-icon></button><button><cad-icon name="min"></cad-icon></button><button><cad-icon name="restore"></cad-icon></button><button><cad-icon name="close"></cad-icon></button></div></div>
<div class="mid"><feature-manager></feature-manager><div class="stage"><part-view></part-view><view-toolbar></view-toolbar><side-tabs></side-tabs><div class="tip" role="tooltip">Saliente-Extruir1</div><p class="mark"><span>莫西网</span>www.3dmox.com</p><button class="handle" aria-label="Panel"><i></i></button></div></div>
<div class="bottom"><div class="nav"><button><svg width="10" height="10"><path d="M1 1v8M9 1 3 5l6 4z" stroke="#777" fill="#777"/></svg></button><button><svg width="10" height="10"><path d="M8 1 2 5l6 4z" fill="#777"/></svg></button><button><svg width="10" height="10"><path d="M2 1l6 4-6 4z" fill="#777"/></svg></button><button><svg width="10" height="10"><path d="M9 1v8M1 1l6 4-6 4z" stroke="#777" fill="#777"/></svg></button></div><button class="m">Modelo</button><button class="s">Estudio de movimiento 1</button></div>`);

/* ---------- task pane ---------- */
define('pane-section', `<style>
:host{display:block;border-top:1px solid #8c8c8c;padding-bottom:22px}
h3{margin:0;height:24px;display:flex;align-items:center;justify-content:space-between;font-size:11px;font-weight:700;color:#f0f0f0;padding:0 6px 0 3px}
</style><h3><span></span><button aria-label="Contraer"><svg width="14" height="12"><path d="M2 6l5-4 5 4M2 10l5-4 5 4" fill="none" stroke="#999" stroke-width="2.500"/></svg></button></h3><slot></slot>`,
 (h,r)=>r.querySelector('span').textContent=h.getAttribute('heading'));
define('pane-link', `<style>:host{display:block;font-size:11px;line-height:13px}a{display:flex;min-height:28px;align-items:center;gap:5px;padding:1px 0 3px 3px}cad-icon{margin-bottom:6px}span{max-width:212px}</style>
<a href="#"><cad-icon></cad-icon><span><slot></slot></span></a>`,
 (h,r)=>r.querySelector('cad-icon').setAttribute('name',h.getAttribute('icon')));
define('task-pane', `<style>
:host{display:flex;flex-direction:column;flex:none;width:308px;background:#484848;border-left:6px solid #a9a9ab}
header{display:flex;align-items:center;height:21px;background:#a9a9ab;border-bottom:1px solid #222;color:#111;flex:none;padding-right:4px;gap:4px}
h2{flex:1;text-align:center;margin:0 8px 0 0;font-size:13px;font-weight:700;color:#f2f2f2}
header cad-icon{--size:15px}
.body{padding:26px 26px 0 11px}
.hello{margin-bottom:20px}.hello pane-link{--size:17px}
</style>
<header><button aria-label="Ocultar"><svg width="20" height="14"><path d="M9 3 5 7l4 4M14 3l-4 4 4 4" fill="none" stroke="#111" stroke-width="2"/></svg></button><h2>Recursos de SOLIDWORKS</h2><button><cad-icon name="cog"></cad-icon></button><button><cad-icon name="pin"></cad-icon></button></header>
<div class="body"><div class="hello"><pane-link icon="home">Bienvenido a SOLIDWORKS</pane-link></div>
<pane-section heading="Herramientas de SOLIDWORKS"><pane-link icon="sw">Generador de la pestaña de propiedades</pane-link><pane-link icon="swrx">SOLIDWORKS Rx</pane-link><pane-link icon="swrx">Prueba comparativa de rendimiento</pane-link><pane-link icon="score">Comparar My Score</pane-link><pane-link icon="wizard">Asistente de configuraciones de SOLIDWORKS</pane-link><pane-link icon="prod">Mis productos</pane-link></pane-section>
<pane-section heading="Recursos en línea"><pane-link icon="dx">3DEXPERIENCE Marketplace</pane-link><pane-link icon="hands">Partner Solutions</pane-link></pane-section>
<pane-section heading="Servicios por suscripción"><pane-link icon="subs">Servicios por suscripción</pane-link></pane-section></div>`);

define('status-bar', `<style>:host{display:flex;height:21px;flex:none;background:#484848;border-top:1px solid #8a8a8a;border-bottom:1px solid #1c1c1c;align-items:center;padding:3px 4px 0 1px}
.e{margin-left:auto;margin-right:137px}drop-caret{margin-left:32px}cad-icon{--size:14px;margin-left:19px}</style>
<span>SOLIDWORKS 2025 SP0.0</span><span class="e">Editando Pieza</span><span>MMGS</span><drop-caret up></drop-caret><cad-icon name="tagsw"></cad-icon>`);

define('cad-desktop', `<style>:host{display:flex;flex-direction:column;height:100%;padding-bottom:68px;background:#efefef}.main{flex:1;display:flex;min-height:0}</style>
<title-bar></title-bar><ribbon-bar></ribbon-bar><div class="main"><work-space></work-space><task-pane></task-pane></div><status-bar></status-bar>`);

/* ---------- browser window behind ---------- */
define('web-browser', `<style>
:host{display:flex;flex-direction:column;overflow:hidden;background:#fff;color:#333;border-top:122px solid #efefef;white-space:nowrap}
.tabs{display:flex;height:49px;background:#253022;color:#e8ecdf;align-items:flex-start;padding-left:7px;flex:none}
.tabs>button{width:34px;height:34px;border-radius:10px;background:#374132;flex:none;margin-top:7px}
.tab{display:flex;align-items:center;gap:9px;height:45px;margin:4px 0 0 8px;padding:0 10px 3px;background:#33402d;border-radius:10px 0 0 0;flex:none}
.tab b{font-size:15px;color:#e5483a}.tab i{font-style:normal;color:#1f2b1e}
.nav{display:flex;gap:26px;height:56px;background:#33402d;align-items:center;padding-left:18px;flex:none}
.marks{display:flex;height:44px;background:#33402d;align-items:center;padding:0 0 8px 23px;gap:8px;color:#cdd6bf;flex:none}
.hero{height:94px;background:#222;flex:none}
.crumb{height:73px;border-bottom:1px solid #ccc;padding:20px 0 0 83px;font:24px/34px "Open Sans",sans-serif;flex:none}
h2{margin:0;padding:49px 0 0 83px;font:28px/38px "Open Sans",sans-serif;flex:none}
.card{margin:31px -200px 0 83px;height:256px;flex:none;border:1px solid #ddd;border-radius:4px;padding:25px 21px 0;box-shadow:inset 0 -1px #fff,inset 0 -3px #aaa}
.th{width:60px;height:34px;border:2px solid #d4d4d4;font:700 14px/22px "Liberation Sans",sans-serif;padding-left:2px;border-top:10px solid #e4e4e4}
.like{display:flex;gap:7px;padding:10px 0 0 98px;color:#999;font-size:15px;overflow:hidden}
</style>
<div class="tabs"><button aria-label="Buscar pestañas"><cad-icon name="down"></cad-icon></button><div class="tab"><b><i>G</i>C</b><span>Victor M</span></div></div>
<div class="nav"><cad-icon name="back"></cad-icon><cad-icon name="fwd"></cad-icon><cad-icon name="reload"></cad-icon></div>
<div class="marks"><cad-icon name="apps"></cad-icon><span>Aplicaciones</span></div>
<div class="hero"></div><div class="crumb">About</div><h2>Model</h2>
<div class="card"><div class="th">373</div></div><div class="like"><cad-icon name="thumb"></cad-icon><span>C</span></div>`);
</script>
</body>
</html>
